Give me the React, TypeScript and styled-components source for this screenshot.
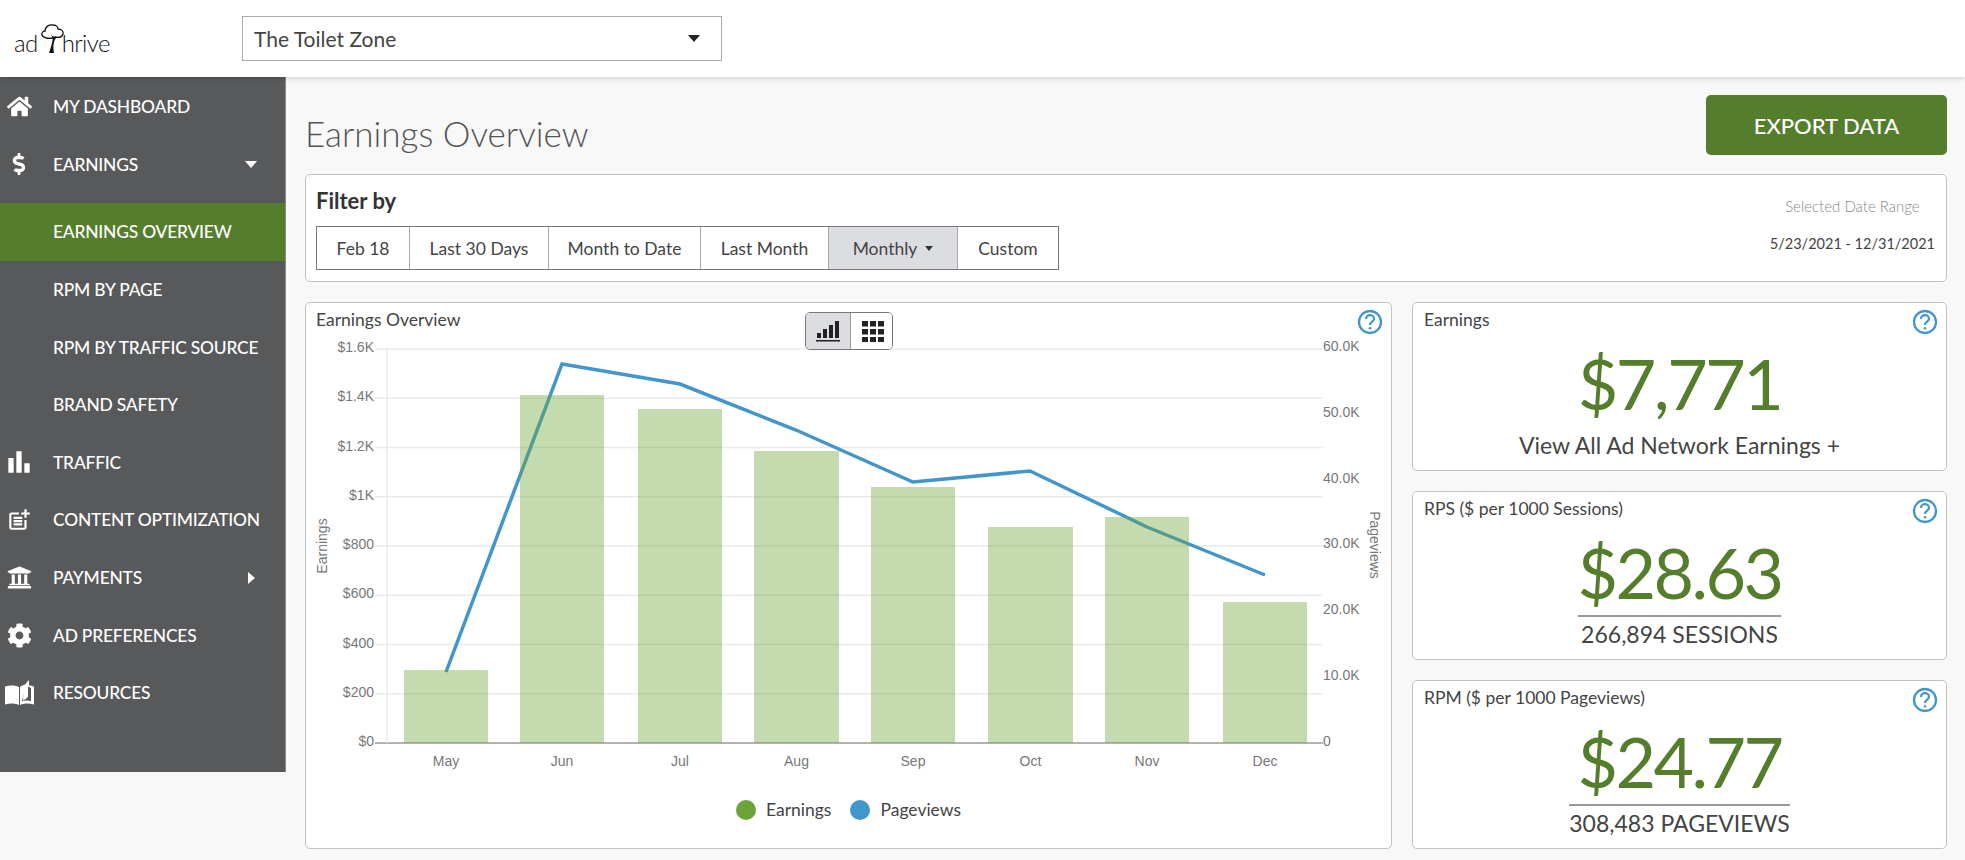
import React from 'react';
import styled, { createGlobalStyle } from 'styled-components';
import { FaHome, FaDollarSign, FaUniversity, FaCog } from 'react-icons/fa';
import { MdBarChart, MdOutlinePostAdd } from 'react-icons/md';

const GREEN = '#547e2c';
const BLUE = '#4396c9';

const GlobalStyle = createGlobalStyle`
  html, body {
    margin: 0;
    padding: 0;
    background: #f8f8f8;
    font-family: Lato, "Noto Sans", sans-serif;
    color: #444;
  }
  * {
    box-sizing: border-box;
  }
`;

const Page = styled.div`
  width: 1965px;
  height: 860px;
  overflow: hidden;
  display: flex;
  flex-direction: column;
`;

const TopBar = styled.header`
  height: 77px;
  flex: none;
  background: #fff;
  display: flex;
  align-items: center;
  box-shadow: 0 1px 6px rgba(0, 0, 0, 0.18);
  position: relative;
  z-index: 2;
`;

const Logo = styled.div`
  width: 242px;
  padding-left: 14px;
  display: flex;
  align-items: flex-end;
  height: 30px;
  font-size: 24px;
  font-weight: 300;
  line-height: 22px;
  letter-spacing: -0.6px;
  color: #111;
`;

const SiteSelect = styled.div`
  width: 480px;
  height: 45px;
  border: 1px solid #aaa;
  background: #fff;
  padding: 0 11px;
  display: flex;
  align-items: center;
  justify-content: space-between;
  font-size: 21px;
  color: #444;

  &::after {
    content: '';
    margin-right: 10px;
    border-left: 6px solid transparent;
    border-right: 6px solid transparent;
    border-top: 7px solid #222;
  }
`;

const Body = styled.div`
  flex: 1;
  display: flex;
  align-items: flex-start;
  min-height: 0;
`;

const Sidebar = styled.nav`
  width: 286px;
  height: 695px;
  flex: none;
  background: #58595b;
  padding-top: 1px;
  border-right: 1px solid #8a8a8c;
`;

const NavItem = styled.div<{ $active?: boolean }>`
  height: 57.6px;
  display: flex;
  align-items: center;
  background: ${p => (p.$active ? GREEN : 'transparent')};
  color: #fff;
  font-size: 17.4px;
  font-weight: 500;
  letter-spacing: -0.2px;
`;

const NavIcon = styled.span`
  width: 38px;
  margin-right: 15px;
  flex: none;
  display: flex;
  justify-content: center;
  color: #fff;
`;

const SubMenu = styled.div`
  margin-top: 10px;
`;

const CaretDown = styled.span`
  margin-left: auto;
  margin-right: 28px;
  border-left: 6px solid transparent;
  border-right: 6px solid transparent;
  border-top: 7px solid #fff;
`;

const CaretRight = styled.span`
  margin-left: auto;
  margin-right: 30px;
  border-top: 6px solid transparent;
  border-bottom: 6px solid transparent;
  border-left: 7px solid #fff;
`;

const Main = styled.main`
  flex: 1;
  padding: 18px 18px 0 19px;
  display: flex;
  flex-direction: column;
`;

const TitleRow = styled.div`
  height: 60px;
  display: flex;
  align-items: center;
  justify-content: space-between;
`;

const Title = styled.h1`
  margin: 0;
  padding-top: 16px;
  font-size: 35px;
  font-weight: 300;
  color: #555;
`;

const ExportButton = styled.button`
  width: 241px;
  height: 60px;
  border: 0;
  border-radius: 5px;
  background: ${GREEN};
  color: #fff;
  font-family: inherit;
  font-size: 22px;
  font-weight: 500;
`;

const Panel = styled.section`
  background: #fff;
  border: 1px solid #c2c2c2;
  border-radius: 5px;
  position: relative;
`;

const FilterPanel = styled(Panel)`
  height: 108px;
  margin-top: 19px;
  padding: 11px 11px 0 10px;
  display: flex;
  justify-content: space-between;
`;

const FilterTitle = styled.div`
  height: 30px;
  margin-bottom: 10px;
  font-size: 22px;
  line-height: 30px;
  font-weight: 700;
  color: #333;
`;

const RangeGroup = styled.div`
  display: grid;
  grid-template-columns: 92px 139px 152px 128px 129px 101px;
  height: 44px;
  border: 1px solid #777;
`;

const RangeButton = styled.div<{ $active?: boolean }>`
  display: flex;
  align-items: center;
  justify-content: center;
  gap: 8px;
  font-size: 17.5px;
  color: #444;
  background: ${p => (p.$active ? '#dcdde0' : '#fff')};

  & + & {
    border-left: 1px solid #aaa;
  }

  i {
    border-left: 4.5px solid transparent;
    border-right: 4.5px solid transparent;
    border-top: 5px solid #333;
  }
`;

const DateBlock = styled.div`
  padding-top: 8px;
  text-align: center;
`;

const DateLabel = styled.div`
  font-size: 15px;
  line-height: 24px;
  font-weight: 300;
  color: #888;
`;

const DateValue = styled.div`
  margin-top: 14px;
  font-size: 14.5px;
  line-height: 24px;
  color: #444;
`;

const Content = styled.div`
  margin-top: 20px;
  height: 547px;
  display: flex;
  gap: 20px;
`;

const ChartPanel = styled(Panel)`
  width: 1087px;
  flex: none;
`;

const CardTitle = styled.div`
  height: 38px;
  padding: 5px 10px 0;
  font-size: 17.5px;
  line-height: 24px;
  color: #444;
`;

const ChartToggle = styled.div`
  position: absolute;
  top: 9px;
  left: 499px;
  width: 88px;
  height: 38px;
  display: grid;
  grid-template-columns: 44px 44px;
  border: 1px solid #777;
  border-radius: 5px;
  overflow: hidden;
  background: #fff;
  z-index: 1;
`;

const ToggleButton = styled.div<{ $active?: boolean }>`
  display: flex;
  align-items: center;
  justify-content: center;
  background: ${p => (p.$active ? '#dcdde0' : '#fff')};

  & + & {
    border-left: 1px solid #999;
  }
`;

const HelpButton = styled.span`
  position: absolute;
  top: 6px;
  right: 8px;
  display: flex;
`;

const ChartSvg = styled.svg`
  display: block;
`;

const AxisText = styled.text`
  font-family: "Liberation Sans", Arial, sans-serif;
  font-size: 14px;
  fill: #777;
`;

const Legend = styled.div`
  margin-top: 14px;
  display: flex;
  justify-content: center;
  align-items: center;
  gap: 19px;
  font-size: 17.5px;
  color: #444;
`;

const LegendItem = styled.div`
  display: flex;
  align-items: center;
  gap: 10px;
`;

const LegendDot = styled.span<{ $color: string }>`
  width: 20px;
  height: 20px;
  border-radius: 50%;
  background: ${p => p.$color};
`;

const StatColumn = styled.div`
  flex: 1;
  display: flex;
  flex-direction: column;
  gap: 20px;
`;

const StatCard = styled(Panel)`
  flex: 1;
  display: flex;
  flex-direction: column;
  align-items: center;
  padding-top: 5px;
`;

const StatTitle = styled.div`
  align-self: stretch;
  padding-left: 11px;
  font-size: 17.5px;
  line-height: 24px;
  color: #444;
`;

const StatValue = styled.div`
  margin-top: 9px;
  height: 84px;
  font-size: 70px;
  line-height: 84px;
  letter-spacing: -2.6px;
  color: ${GREEN};
  text-align: center;
`;

const StatBody = styled.div`
  display: inline-flex;
  flex-direction: column;
`;

const StatFooter = styled.div<{ $rule?: boolean }>`
  border-top: ${p => (p.$rule ? '2px solid #999' : '0')};
  margin-top: ${p => (p.$rule ? '1px' : '3px')};
  font-size: 23px;
  line-height: 34px;
  color: #444;
  text-align: center;
  white-space: nowrap;
`;

const LogoTree = () => (
  <svg width="15" height="30" viewBox="0 0 15 30" style={{ margin: '0 1px 0 8px', overflow: 'visible' }}>
    <path
      d="M7 14c-4 1-10 0-11-3s2-4 3-4c0-4 4-7 8-6 3 0 5 2 5 4 3 0 6 2 5 5s-4 4-8 3c-1 1-1 1-2 1z"
      fill="none"
      stroke="#111"
      strokeWidth="1.3"
    />
    <path d="M5 11c2 3 2 4 1 8-1 4-2 7-3 10h5c-1-5-1-11 2-15" fill="#111" />
  </svg>
);

const BookIcon = () => (
  <svg width="29" height="25" viewBox="0 0 29 25" fill="#fff">
    <path d="M0 6.5C5 5 10 5 14 7v18c-4-2-9-2-14-.5z" />
    <path d="M15 7c2-1.500 3-2 5-2.500L24 0v5.500c2 0 3.500.5 5 1v18c-5-1.500-10-1.500-14 .5z" />
    <path d="M17 21c1-6 3-11 6-14.500L26 8v13c-3-.8-6-.8-9 0z" fill="#58595b" />
    <path d="M18 20.500c2-.8 4-2 5-4V2.500c-3 3-5 10-5 18z" fill="#fff" />
  </svg>
);

const HelpIcon = () => (
  <svg width="26" height="26" viewBox="0 0 26 26" fill="none" stroke={BLUE} strokeWidth="2.300">
    <circle cx="13" cy="13" r="11" />
    <path d="M9 10c0-2.500 2-3.800 4-3.800s4 1.300 4 3.500c0 3-4 3-4 6.300" strokeWidth="2.200" />
    <circle cx="13" cy="19.300" r="1.300" fill={BLUE} stroke="none" />
  </svg>
);

const SignalIcon = () => (
  <svg width="24" height="21" viewBox="0 0 24 21" fill="#222">
    <rect x="1" y="12" width="4" height="5" />
    <rect x="7" y="8" width="4" height="9" />
    <rect x="13" y="4" width="4" height="13" />
    <rect x="19" y="0" width="4" height="17" />
    <rect x="0" y="19" width="24" height="1.500" />
  </svg>
);

const GridIcon = () => (
  <svg width="22" height="21" viewBox="0 0 22 21" fill="#222">
    {[0, 8, 16].map(x =>
      [0, 8, 16].map(y => <rect key={`${x}-${y}`} x={x} y={y} width="6" height="5.500" />)
    )}
  </svg>
);

const leftTicks = ['$1.6K', '$1.4K', '$1.2K', '$1K', '$800', '$600', '$400', '$200', '$0'];
const rightTicks = ['60.0K', '50.0K', '40.0K', '30.0K', '20.0K', '10.0K', '0'];

const months = [
  { name: 'May', x1: 404, x2: 488, top: 670, lineX: 446, lineY: 672 },
  { name: 'Jun', x1: 520, x2: 604, top: 395, lineX: 562, lineY: 364 },
  { name: 'Jul', x1: 638, x2: 722, top: 409, lineX: 680, lineY: 384 },
  { name: 'Aug', x1: 754, x2: 839, top: 451, lineX: 796, lineY: 430 },
  { name: 'Sep', x1: 871, x2: 955, top: 487, lineX: 913, lineY: 482 },
  { name: 'Oct', x1: 988, x2: 1073, top: 527, lineX: 1030, lineY: 471 },
  { name: 'Nov', x1: 1105, x2: 1189, top: 517, lineX: 1147, lineY: 527 },
  { name: 'Dec', x1: 1223, x2: 1307, top: 602, lineX: 1265, lineY: 575 },
];

const AXIS_TOP = 349;
const AXIS_BOTTOM = 743;

const EarningsChart = () => (
  <ChartSvg width="1085" height="444" viewBox="306 341 1085 444">
    {leftTicks.map((label, i) => {
      const y = AXIS_TOP + ((AXIS_BOTTOM - AXIS_TOP) / 8) * i;
      return (
        <g key={label}>
          <line
            x1="375"
            x2="1323"
            y1={y}
            y2={y}
            stroke={i === 8 ? '#999' : '#eaeaea'}
            strokeWidth={i === 8 ? 1.5 : 1.5}
          />
          <AxisText x="374" y={y + 3} textAnchor="end">{label}</AxisText>
        </g>
      );
    })}
    <line x1="387" x2="387" y1={AXIS_TOP} y2={AXIS_BOTTOM} stroke="#eaeaea" strokeWidth="1.500" />
    {rightTicks.map((label, i) => (
      <AxisText key={label} x="1323" y={346 + 65.800 * i + 5}>{label}</AxisText>
    ))}
    <AxisText x="0" y="0" textAnchor="middle" transform="translate(327 546) rotate(-90)">Earnings</AxisText>
    <AxisText x="0" y="0" textAnchor="middle" transform="translate(1370 545) rotate(90)">Pageviews</AxisText>

    <polyline
      points={months.map(m => `${m.lineX},${m.lineY}`).join(' ')}
      fill="none"
      stroke={BLUE}
      strokeWidth="3.500"
    />
    {months.map(m => (
      <rect
        key={m.name}
        x={m.x1}
        y={m.top}
        width={m.x2 - m.x1}
        height={AXIS_BOTTOM - m.top}
        fill="rgba(107, 165, 57, 0.4)"
      />
    ))}
    {months.map(m => (
      <AxisText key={m.name} x={(m.x1 + m.x2) / 2} y="766" textAnchor="middle">{m.name}</AxisText>
    ))}
  </ChartSvg>
);

const stats = [
  { title: 'Earnings', value: '$7,771', footer: 'View All Ad Network Earnings +', rule: false },
  { title: 'RPS ($ per 1000 Sessions)', value: '$28.63', footer: '266,894 SESSIONS', rule: true },
  { title: 'RPM ($ per 1000 Pageviews)', value: '$24.77', footer: '308,483 PAGEVIEWS', rule: true },
];

const App: React.FC = () => {
  return (
    <Page>
      <GlobalStyle />
      <TopBar>
        <Logo>
          ad
          <LogoTree />
          hrive
        </Logo>
        <SiteSelect>The Toilet Zone</SiteSelect>
      </TopBar>
      <Body>
        <Sidebar>
          <NavItem>
            <NavIcon><FaHome size={25} /></NavIcon>
            MY DASHBOARD
          </NavItem>
          <NavItem>
            <NavIcon><FaDollarSign size={22} /></NavIcon>
            EARNINGS
            <CaretDown />
          </NavItem>
          <SubMenu>
            <NavItem $active>
              <NavIcon />
              EARNINGS OVERVIEW
            </NavItem>
            <NavItem>
              <NavIcon />
              RPM BY PAGE
            </NavItem>
            <NavItem>
              <NavIcon />
              RPM BY TRAFFIC SOURCE
            </NavItem>
            <NavItem>
              <NavIcon />
              BRAND SAFETY
            </NavItem>
          </SubMenu>
          <NavItem>
            <NavIcon><MdBarChart size={32} /></NavIcon>
            TRAFFIC
          </NavItem>
          <NavItem>
            <NavIcon><MdOutlinePostAdd size={26} /></NavIcon>
            CONTENT OPTIMIZATION
          </NavItem>
          <NavItem>
            <NavIcon><FaUniversity size={25} /></NavIcon>
            PAYMENTS
            <CaretRight />
          </NavItem>
          <NavItem>
            <NavIcon><FaCog size={25} /></NavIcon>
            AD PREFERENCES
          </NavItem>
          <NavItem>
            <NavIcon><BookIcon /></NavIcon>
            RESOURCES
          </NavItem>
        </Sidebar>
        <Main>
          <TitleRow>
            <Title>Earnings Overview</Title>
            <ExportButton>EXPORT DATA</ExportButton>
          </TitleRow>
          <FilterPanel>
            <div>
              <FilterTitle>Filter by</FilterTitle>
              <RangeGroup>
                <RangeButton>Feb 18</RangeButton>
                <RangeButton>Last 30 Days</RangeButton>
                <RangeButton>Month to Date</RangeButton>
                <RangeButton>Last Month</RangeButton>
                <RangeButton $active>Monthly <i /></RangeButton>
                <RangeButton>Custom</RangeButton>
              </RangeGroup>
            </div>
            <DateBlock>
              <DateLabel>Selected Date Range</DateLabel>
              <DateValue>5/23/2021 - 12/31/2021</DateValue>
            </DateBlock>
          </FilterPanel>
          <Content>
            <ChartPanel>
              <CardTitle>Earnings Overview</CardTitle>
              <ChartToggle>
                <ToggleButton $active><SignalIcon /></ToggleButton>
                <ToggleButton><GridIcon /></ToggleButton>
              </ChartToggle>
              <HelpButton><HelpIcon /></HelpButton>
              <EarningsChart />
              <Legend>
                <LegendItem><LegendDot $color="#6ba539" />Earnings</LegendItem>
                <LegendItem><LegendDot $color={BLUE} />Pageviews</LegendItem>
              </Legend>
            </ChartPanel>
            <StatColumn>
              {stats.map(s => (
                <StatCard key={s.title}>
                  <StatTitle>{s.title}</StatTitle>
                  <HelpButton><HelpIcon /></HelpButton>
                  <StatBody>
                    <StatValue>{s.value}</StatValue>
                    <StatFooter $rule={s.rule}>{s.footer}</StatFooter>
                  </StatBody>
                </StatCard>
              ))}
            </StatColumn>
          </Content>
        </Main>
      </Body>
    </Page>
  );
};

export default App;
